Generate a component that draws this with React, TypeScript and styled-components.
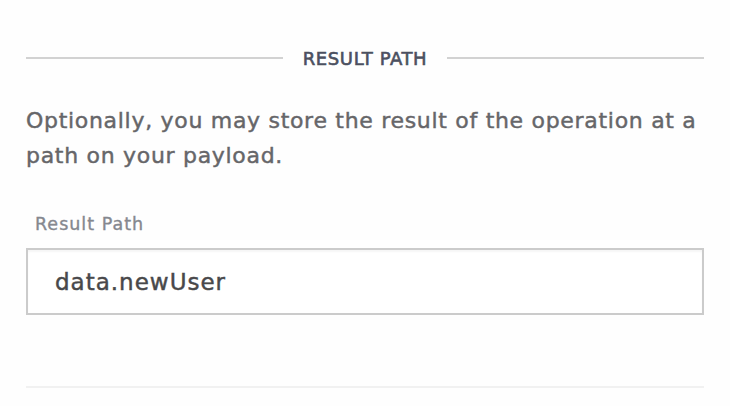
import React from "react";
import styled, { createGlobalStyle } from "styled-components";

const Global = createGlobalStyle`
  html, body { margin: 0; padding: 0; background: #fefefe; }
  body { font-family: "DejaVu Sans", "Open Sans", sans-serif; }
`;

const Page = styled.div`
  width: 730px;
  height: 406px;
  box-sizing: border-box;
  padding: 38px 26px 0 26px;
  display: flex;
  flex-direction: column;
`;

const SectionHeader = styled.div`
  display: flex;
  align-items: center;
  gap: 20px;
  height: 40px;
`;

const Rule = styled.div`
  flex: 1;
  height: 2px;
  background: #d2d2d2;
`;

const Title = styled.h3`
  margin: 0;
  font-size: 18px;
  font-weight: 400;
  letter-spacing: 0.6px;
  color: #4b5060;
  -webkit-text-stroke: 0.6px #4b5060;
  white-space: nowrap;
`;

const Description = styled.p`
  margin: 25px 0 0 0;
  font-size: 22px;
  letter-spacing: 0.7px;
  line-height: 35px;
  color: #666669;
  -webkit-text-stroke: 0.45px #666669;
`;

const Label = styled.label`
  display: block;
  margin-top: 39px;
  font-size: 17.5px;
  letter-spacing: 1px;
  line-height: 24px;
  color: #85888f;
  -webkit-text-stroke: 0.35px #85888f;
  padding-left: 9px;
`;

const Input = styled.input`
  margin-top: 12px;
  box-sizing: border-box;
  width: 100%;
  height: 67px;
  border: 2px solid #cbcbcb;
  box-shadow: inset 0 2px 2px rgba(0, 0, 0, 0.04);
  padding: 0 27px;
  font-family: "DejaVu Sans", "Open Sans", sans-serif;
  font-size: 23px;
  letter-spacing: 1px;
  color: #48484a;
  -webkit-text-stroke: 0.45px #48484a;
  background: #fff;
  outline: none;
`;

const BottomRule = styled.div`
  margin-top: 71px;
  height: 2px;
  background: #f1f1f1;
`;

export default function App() {
  return (
    <>
      <Global />
      <Page>
        <SectionHeader>
          <Rule />
          <Title>RESULT PATH</Title>
          <Rule />
        </SectionHeader>
        <Description>
          Optionally, you may store the result of the operation at a path on your payload.
        </Description>
        <Label>Result Path</Label>
        <Input defaultValue="data.newUser" />
        <BottomRule />
      </Page>
    </>
  );
}
